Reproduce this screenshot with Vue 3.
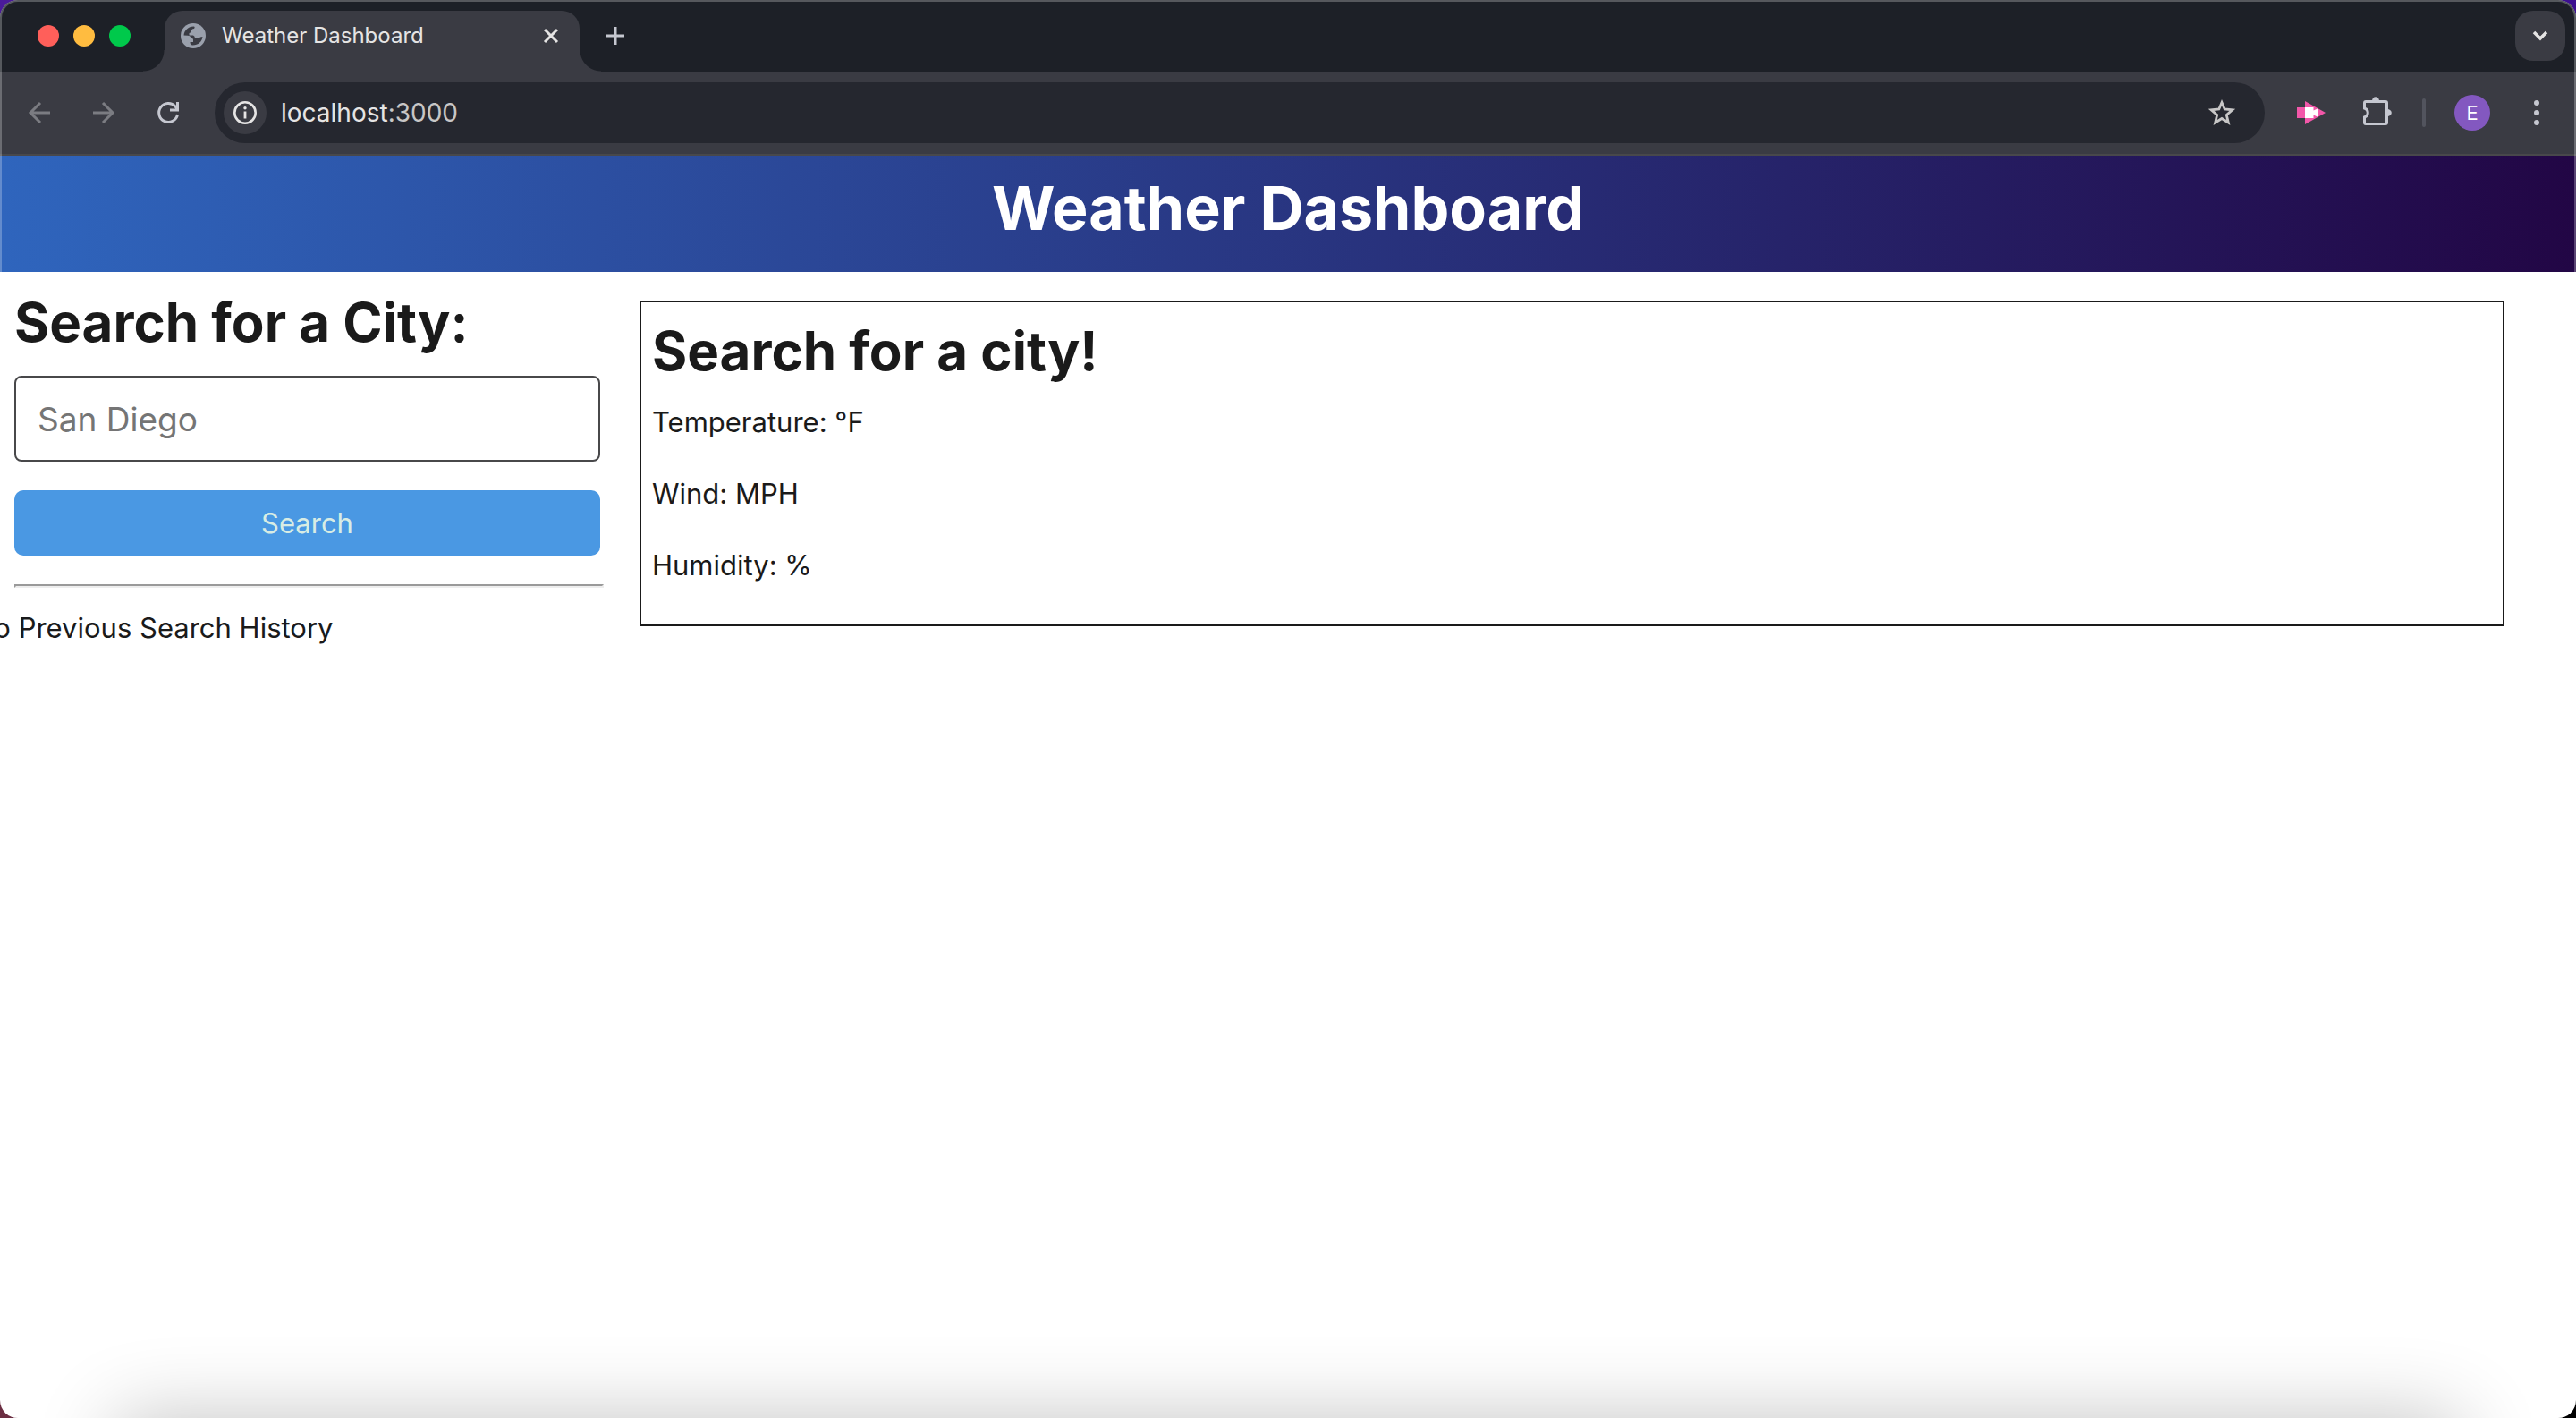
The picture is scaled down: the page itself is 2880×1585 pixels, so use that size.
<script setup>
import { ref } from 'vue'

const city = ref('')
const current = [
  { label: 'Temperature', value: '°F' },
  { label: 'Wind', value: 'MPH' },
  { label: 'Humidity', value: '%' },
]
</script>

<template>
  <div class="desktop">
    <div class="window">
      <div class="tab-strip">
        <div class="lights">
          <button class="light red" aria-label="Close window"></button>
          <button class="light yellow" aria-label="Minimize window"></button>
          <button class="light green" aria-label="Zoom window"></button>
        </div>
        <div class="tab">
          <svg class="s28" viewBox="0 0 28 28" aria-hidden="true">
            <circle cx="14" cy="14" r="14" fill="#9aa0ac" />
            <path d="M3.500 13.500 C4 8 8.500 3.800 14.500 3.600 Q16.500 4 15 6 Q11.500 6.500 12 8.500 Q12 10.500 9.500 11 V13.500 H14 Q16 14 16 17 H20 Q21.500 15 24.500 15 C24 20.500 19.500 24.500 13.500 24.500 Q10.500 24.300 10.500 21 H14 V18.500 Q14 16.500 11.500 16 Q10.500 13.800 8 13.800 Z" fill="#3a3b43" />
          </svg>
          <span class="tab-title">Weather Dashboard</span>
          <button class="icon-btn" aria-label="Close tab">
            <svg class="s16" viewBox="0 0 16 16"><path d="M1 1 L15 15 M15 1 L1 15" stroke="#e5e4e4" stroke-width="3" /></svg>
          </button>
        </div>
        <button class="icon-btn new-tab" aria-label="New tab">
          <svg class="s20" viewBox="0 0 20 20"><path d="M10 0 V20 M0 10 H20" stroke="#c5c7d0" stroke-width="3" /></svg>
        </button>
        <button class="tab-search" aria-label="Search tabs">
          <svg class="s20" viewBox="0 0 20 20"><path d="M3 6 L10 13 L17 6" fill="none" stroke="#e5e4e4" stroke-width="3.500" /></svg>
        </button>
      </div>

      <div class="toolbar">
        <div class="nav">
          <button class="icon-btn" aria-label="Back">
            <svg class="s24" viewBox="0 0 24 24"><path d="M24 12 H2 M13 1 L2 12 L13 23" fill="none" stroke="#7b7c82" stroke-width="3" /></svg>
          </button>
          <button class="icon-btn" aria-label="Forward">
            <svg class="s24" viewBox="0 0 24 24"><path d="M0 12 H22 M11 1 L22 12 L11 23" fill="none" stroke="#7b7c82" stroke-width="3" /></svg>
          </button>
          <button class="icon-btn" aria-label="Reload">
            <svg class="s24" viewBox="0 0 24 24"><path d="M22.500 14 A10.500 10.500 0 1 1 20 5 L23 8.500 M22.500 0 V9 H14" fill="none" stroke="#c5c7d0" stroke-width="3" /></svg>
          </button>
        </div>
        <div class="address">
          <button class="site-info" aria-label="Site information">
            <svg class="s28" viewBox="0 0 28 28"><circle cx="14" cy="14" r="11.700" fill="none" stroke="#e5e4e4" stroke-width="2.600" /><circle cx="14" cy="8.800" r="1.700" fill="#e5e4e4" /><path d="M14 12.500 V20.500" stroke="#e5e4e4" stroke-width="2.800" /></svg>
          </button>
          <span class="url">localhost<span class="port">:3000</span></span>
          <button class="icon-btn" aria-label="Bookmark this page">
            <svg class="s32" viewBox="0 0 32 32"><path d="M16 4.500 L19.200 12 L27.800 12.800 L21.300 18.500 L23.300 27 L16 22.500 L8.700 27 L10.700 18.500 L4.200 12.800 L12.800 12 Z" fill="none" stroke="#c7c6c6" stroke-width="2.800" /></svg>
          </button>
        </div>
        <div class="actions">
          <button class="icon-btn" aria-label="Screen recorder">
            <svg class="s32" viewBox="0 0 32 32"><path d="M0 10 H9 V3 L32 16 L9 29 V22 H0 Z" fill="#f257a9" /><path d="M9 10 H18.500 V13.500 L24 11 V21 L18.500 18.500 V22 H9 Z" fill="#fff" /></svg>
          </button>
          <button class="icon-btn" aria-label="Extensions">
            <svg class="s32" viewBox="0 2 32 32"><path d="M1.500 7 Q1.500 5.500 3 5.500 H25 Q26.500 5.500 26.500 7 V29 Q26.500 30.500 25 30.500 H3 Q1.500 30.500 1.500 29 V23 A5.200 5.200 0 0 0 1.500 13 Z" fill="none" stroke="#c5c7d0" stroke-width="3" /><path d="M10 5 A4 4.800 0 0 1 18 5 Z M27 14 A4.800 4 0 0 1 27 22 Z" fill="#c5c7d0" /></svg>
          </button>
          <span class="divider"></span>
          <button class="avatar" aria-label="Profile">E</button>
          <button class="icon-btn menu" aria-label="Menu">
            <svg class="s28" viewBox="0 0 28 28" fill="#c5c7d0"><circle cx="14" cy="3" r="3" /><circle cx="14" cy="14" r="3" /><circle cx="14" cy="25" r="3" /></svg>
          </button>
        </div>
      </div>

      <header class="page-header"><h1>Weather Dashboard</h1></header>

      <main class="page">
        <aside class="sidebar">
          <form class="search" @submit.prevent>
            <label class="heading" for="city">Search for a City:</label>
            <input id="city" v-model="city" type="text" placeholder="San Diego" />
            <button class="submit" type="submit">Search</button>
          </form>
          <hr />
          <p class="history">No Previous Search History</p>
        </aside>
        <section class="today">
          <h2 class="heading">Search for a city!</h2>
          <p v-for="item in current" :key="item.label">{{ item.label }}: {{ item.value }}</p>
        </section>
      </main>
      <div class="shade"></div>
    </div>
  </div>
</template>

<style>
body {
  margin: 0;
}
</style>

<style scoped>
* {
  box-sizing: border-box;
}
.desktop {
  min-height: 100vh;
  display: flex;
  background: linear-gradient(90deg, #4a1a9a 50%, #3c1090 50%) top / 100% 50% no-repeat,
    linear-gradient(90deg, #6b2e42 50%, #000 50%);
  font-family: Inter, "Liberation Sans", sans-serif;
  color: #1a1a1a;
}
.window {
  position: relative;
  flex: 1;
  min-width: 0;
  display: flex;
  flex-direction: column;
  overflow: hidden;
  border-radius: 20px;
  background: #fff;
}
.window::after {
  content: "";
  position: absolute;
  inset: 0 0 auto;
  height: 304px;
  border: 2px solid rgba(255, 255, 255, 0.25);
  border-bottom: 0;
  border-radius: 20px 20px 0 0;
  pointer-events: none;
}
button {
  padding: 0;
  border: 0;
  background: none;
  font-family: inherit;
}
svg {
  display: block;
  flex: none;
  overflow: visible;
}
.s16 { width: 16px; height: 16px; }
.s20 { width: 20px; height: 20px; }
.s24 { width: 24px; height: 24px; }
.s28 { width: 28px; height: 28px; }
.s32 { width: 32px; height: 32px; }

.tab-strip {
  height: 80px;
  display: flex;
  align-items: center;
  padding: 0 12px 0 42px;
  background: #1d2027;
}
.lights {
  display: flex;
  gap: 16px;
}
.light {
  width: 24px;
  height: 24px;
  border-radius: 50%;
}
.red { background: #ff5f5a; }
.yellow { background: #ffbc40; }
.green { background: #00c94b; }
.tab {
  position: relative;
  align-self: flex-end;
  width: 464px;
  height: 68px;
  margin-left: 38px;
  padding: 0 24px 12px 18px;
  display: flex;
  align-items: center;
  border-radius: 20px 20px 0 0;
  background: #3a3b43;
}
.tab::before,
.tab::after {
  content: "";
  position: absolute;
  bottom: 0;
  width: 24px;
  height: 24px;
}
.tab::before {
  right: 100%;
  background: radial-gradient(circle at 0 0, transparent 23px, #3a3b43 24px);
}
.tab::after {
  left: 100%;
  background: radial-gradient(circle at 100% 0, transparent 23px, #3a3b43 24px);
}
.tab-title {
  flex: 1;
  margin-left: 18px;
  font-size: 24px;
  line-height: 32px;
  color: #e5e4e4;
}
.new-tab {
  margin-left: 30px;
}
.tab-search {
  width: 56px;
  height: 56px;
  margin-left: auto;
  display: grid;
  place-items: center;
  border-radius: 20px;
  background: #3a3b43;
}
.toolbar {
  height: 94px;
  display: flex;
  align-items: center;
  padding: 0 30px 0 32px;
  border-bottom: 2px solid #48484b;
  background: linear-gradient(#3a3b43, #3a3b43);
}
.nav {
  display: flex;
  gap: 48px;
}
.address {
  flex: 1;
  height: 68px;
  margin-left: 40px;
  padding: 0 32px 0 10px;
  display: flex;
  align-items: center;
  border-radius: 34px;
  background: #25272f;
}
.site-info {
  width: 48px;
  height: 48px;
  display: grid;
  place-items: center;
  border-radius: 50%;
  background: #3a3b43;
}
.url {
  flex: 1;
  margin-left: 16px;
  font-size: 28px;
  line-height: 36px;
  color: #e5e4e4;
}
.port {
  color: #c7c6c6;
}
.actions {
  display: flex;
  align-items: center;
  margin-left: 36px;
}
.actions .icon-btn + .icon-btn {
  margin-left: 42px;
}
.divider {
  width: 4px;
  height: 32px;
  margin: 0 32px 0 34px;
  border-radius: 2px;
  background: #52545e;
}
.avatar {
  width: 40px;
  height: 40px;
  border-radius: 50%;
  background: #8358c0;
  color: #fff;
  font-size: 22px;
  line-height: 40px;
}
.menu {
  margin-left: 38px;
}

.page-header {
  height: 130px;
  display: flex;
  justify-content: center;
  padding-top: 16px;
  background: linear-gradient(90deg, #2f65bd, #220645);
}
h1 {
  margin: 0;
  font-size: 68px;
  line-height: 84px;
  font-weight: 700;
  color: #fff;
}
.page {
  flex: 1;
  display: flex;
  align-items: flex-start;
  padding: 16px 80px 16px 16px;
}
.sidebar {
  flex: none;
  width: 659px;
}
.search {
  width: 655px;
  display: flex;
  flex-direction: column;
}
.heading {
  margin: 0 0 20px;
  font-size: 60px;
  line-height: 80px;
  font-weight: 700;
}
input {
  width: 100%;
  height: 96px;
  padding: 0 24px;
  border: 2px solid #48484a;
  border-radius: 8px;
  background: #fff;
  font-family: inherit;
  font-size: 37px;
  color: #1a1a1a;
}
input::placeholder {
  color: #757575;
  opacity: 1;
}
.submit {
  height: 73px;
  margin-top: 32px;
  border-radius: 10px;
  background: #4a98e3;
  font-size: 31px;
  line-height: 40px;
  color: #d8ece4;
}
hr {
  height: 4px;
  margin: 32px 0 0;
  border: 2px solid;
  border-color: #9a9a9a #eee #eee #9a9a9a;
}
.history {
  margin: 25px 0 0 -46px;
  font-size: 31px;
  line-height: 40px;
}
.today {
  flex: 1;
  min-width: 0;
  margin: 16px 0 0 40px;
  padding: 14px 12px 6px;
  border: 2px solid #1a1a1a;
}
.today p {
  margin: 0 0 40px;
  font-size: 31px;
  line-height: 40px;
}
.shade {
  position: absolute;
  top: 100%;
  left: 130px;
  right: 130px;
  height: 240px;
  box-shadow: 0 0 90px rgba(0, 0, 0, 0.24);
}
</style>
